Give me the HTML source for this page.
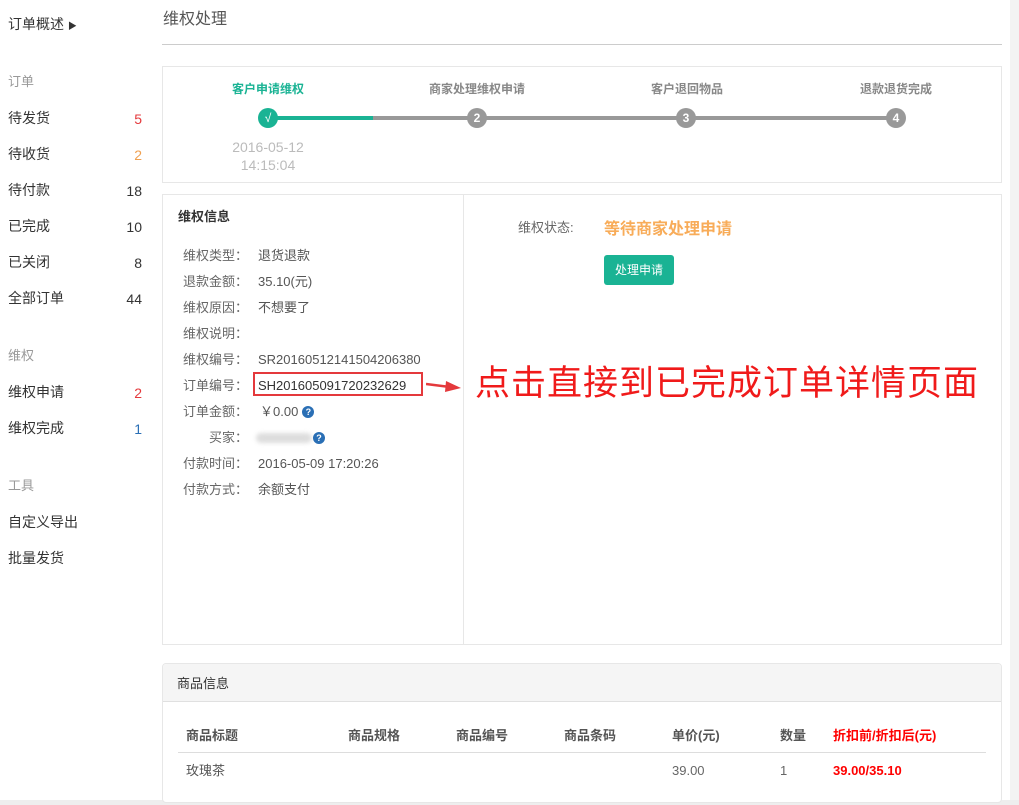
<!DOCTYPE html><html><head><meta charset="utf-8"><style>
*{margin:0;padding:0;box-sizing:border-box}
body{width:1019px;height:805px;background:#fff;font-family:"Liberation Sans","Noto Sans CJK SC",sans-serif;font-size:13px;color:#333;position:relative;overflow:hidden}
.a{position:absolute;white-space:nowrap;line-height:20px}
.box{position:absolute;border:1px solid #e7e7e7;background:#fff}
.side{font-size:14px;color:#333}
.n{position:absolute;left:0;width:142px;text-align:right}
.lbl{color:#666;font-size:13px}
.dot{position:absolute;width:20px;height:20px;border-radius:50%;color:#fff;font-size:12px;font-weight:bold;text-align:center;line-height:20px}
.q{display:inline-block;width:12px;height:12px;border-radius:50%;background:#2a6fb5;color:#fff;font-size:9px;font-weight:bold;text-align:center;line-height:12px;vertical-align:1px;margin-left:4px}
</style></head><body>
<div class="a" style="left:1010px;top:0;width:9px;height:805px;background:#f3f3f3"></div>
<div class="a" style="left:0;top:800px;width:1019px;height:5px;background:#eee"></div>

<div class="a side" style="left:8px;top:14px">订单概述 <span style="font-size:9px">▶</span></div>
<div class="a" style="left:8px;top:72px;color:#999;font-size:13px">订单</div>
<div class="a side" style="left:8px;top:108px">待发货</div><div class="a n" style="top:109px;color:#e4393c;font-size:14px">5</div>
<div class="a side" style="left:8px;top:144px">待收货</div><div class="a n" style="top:145px;color:#f0a050;font-size:14px">2</div>
<div class="a side" style="left:8px;top:180px">待付款</div><div class="a n" style="top:181px;font-size:14px">18</div>
<div class="a side" style="left:8px;top:216px">已完成</div><div class="a n" style="top:217px;font-size:14px">10</div>
<div class="a side" style="left:8px;top:252px">已关闭</div><div class="a n" style="top:253px;font-size:14px">8</div>
<div class="a side" style="left:8px;top:288px">全部订单</div><div class="a n" style="top:289px;font-size:14px">44</div>
<div class="a" style="left:8px;top:346px;color:#999">维权</div>
<div class="a side" style="left:8px;top:382px">维权申请</div><div class="a n" style="top:383px;color:#e4393c;font-size:14px">2</div>
<div class="a side" style="left:8px;top:418px">维权完成</div><div class="a n" style="top:419px;color:#2a6fb5;font-size:14px">1</div>
<div class="a" style="left:8px;top:476px;color:#999">工具</div>
<div class="a side" style="left:8px;top:512px">自定义导出</div>
<div class="a side" style="left:8px;top:548px">批量发货</div>

<div class="a" style="left:163px;top:10px;font-size:16px;color:#555">维权处理</div>
<div class="a" style="left:162px;top:44px;width:840px;height:1px;background:#ccc"></div>

<div class="box" style="left:162px;top:66px;width:840px;height:117px"></div>
<div class="a" style="left:268px;top:116px;width:105px;height:4px;background:#1ab394"></div>
<div class="a" style="left:373px;top:116px;width:523px;height:4px;background:#999"></div>
<div class="dot" style="left:258px;top:108px;background:#1ab394;font-weight:normal">√</div>
<div class="dot" style="left:467px;top:108px;background:#999">2</div>
<div class="dot" style="left:676px;top:108px;background:#999">3</div>
<div class="dot" style="left:886px;top:108px;background:#999">4</div>
<div class="a" style="left:232px;top:79px;font-size:12px;font-weight:bold;color:#1ab394">客户申请维权</div>
<div class="a" style="left:429px;top:79px;font-size:12px;font-weight:bold;color:#888">商家处理维权申请</div>
<div class="a" style="left:651px;top:79px;font-size:12px;font-weight:bold;color:#888">客户退回物品</div>
<div class="a" style="left:860px;top:79px;font-size:12px;font-weight:bold;color:#888">退款退货完成</div>
<div class="a" style="left:218px;top:138px;width:100px;text-align:center;color:#bbb;font-size:14px;line-height:18px">2016-05-12<br>14:15:04</div>

<div class="box" style="left:162px;top:194px;width:840px;height:451px"></div>
<div class="a" style="left:463px;top:195px;width:1px;height:449px;background:#e7e7e7"></div>
<div class="a" style="left:178px;top:207px;font-weight:bold;color:#333">维权信息</div>
<div class="a lbl" style="left:183px;top:246px">维权类型：</div><div class="a" style="left:258px;top:246px;color:#555">退货退款</div>
<div class="a lbl" style="left:183px;top:272px">退款金额：</div><div class="a" style="left:258px;top:272px;color:#555">35.10(元)</div>
<div class="a lbl" style="left:183px;top:298px">维权原因：</div><div class="a" style="left:258px;top:298px;color:#555">不想要了</div>
<div class="a lbl" style="left:183px;top:324px">维权说明：</div>
<div class="a lbl" style="left:183px;top:350px">维权编号：</div><div class="a" style="left:258px;top:350px;color:#555">SR20160512141504206380</div>
<div class="a lbl" style="left:183px;top:376px">订单编号：</div><div class="a" style="left:258px;top:376px;color:#333">SH201605091720232629</div>
<div class="a" style="left:253px;top:372px;width:170px;height:24px;border:2px solid #e4393c"></div>
<div class="a lbl" style="left:183px;top:402px">订单金额：</div><div class="a" style="left:260px;top:402px;color:#555">￥0.00<span class="q">?</span></div>
<div class="a lbl" style="left:209px;top:428px">买家：</div><div class="a" style="left:256px;top:433px;width:56px;height:10px;background:#ddd;border-radius:5px;filter:blur(2px)"></div><div class="a" style="left:309px;top:428px"><span class="q">?</span></div>
<div class="a lbl" style="left:183px;top:454px">付款时间：</div><div class="a" style="left:258px;top:454px;color:#555">2016-05-09 17:20:26</div>
<div class="a lbl" style="left:183px;top:480px">付款方式：</div><div class="a" style="left:258px;top:480px;color:#555">余额支付</div>
<svg class="a" style="left:426px;top:378px" width="36" height="16"><path d="M0 6 L24 9" stroke="#e4393c" stroke-width="2.5"/><path d="M20 3 L35 10 L19 14 Z" fill="#e4393c"/></svg>
<div class="a" style="left:475px;top:362px;font-size:35px;line-height:44px;color:#f01a1a;letter-spacing:1px">点击直接到已完成订单详情页面</div>

<div class="a" style="left:518px;top:218px;color:#666">维权状态:</div>
<div class="a" style="left:604px;top:220px;font-size:16px;font-weight:bold;color:#f8ac59">等待商家处理申请</div>
<div class="a" style="left:604px;top:255px;width:70px;height:30px;background:#1ab394;border-radius:3px;color:#fff;font-size:12px;text-align:center;line-height:30px">处理申请</div>

<div class="box" style="left:162px;top:663px;width:840px;height:140px;border-radius:4px"></div>
<div class="a" style="left:163px;top:664px;width:838px;height:38px;background:#f5f5f5;border-bottom:1px solid #e0e0e0;border-radius:4px 4px 0 0"></div>
<div class="a" style="left:177px;top:674px;color:#333">商品信息</div>
<div class="a" style="left:186px;top:726px;font-weight:bold;color:#555">商品标题</div>
<div class="a" style="left:348px;top:726px;font-weight:bold;color:#555">商品规格</div>
<div class="a" style="left:456px;top:726px;font-weight:bold;color:#555">商品编号</div>
<div class="a" style="left:564px;top:726px;font-weight:bold;color:#555">商品条码</div>
<div class="a" style="left:672px;top:726px;font-weight:bold;color:#555">单价(元)</div>
<div class="a" style="left:780px;top:726px;font-weight:bold;color:#555">数量</div>
<div class="a" style="left:833px;top:726px;font-weight:bold;color:#f00">折扣前/折扣后(元)</div>
<div class="a" style="left:178px;top:752px;width:808px;height:1px;background:#ddd"></div>
<div class="a" style="left:186px;top:761px;color:#555">玫瑰茶</div>
<div class="a" style="left:672px;top:761px;color:#666">39.00</div>
<div class="a" style="left:780px;top:761px;color:#666">1</div>
<div class="a" style="left:833px;top:761px;font-weight:bold;color:#f00">39.00/35.10</div>
</body></html>
